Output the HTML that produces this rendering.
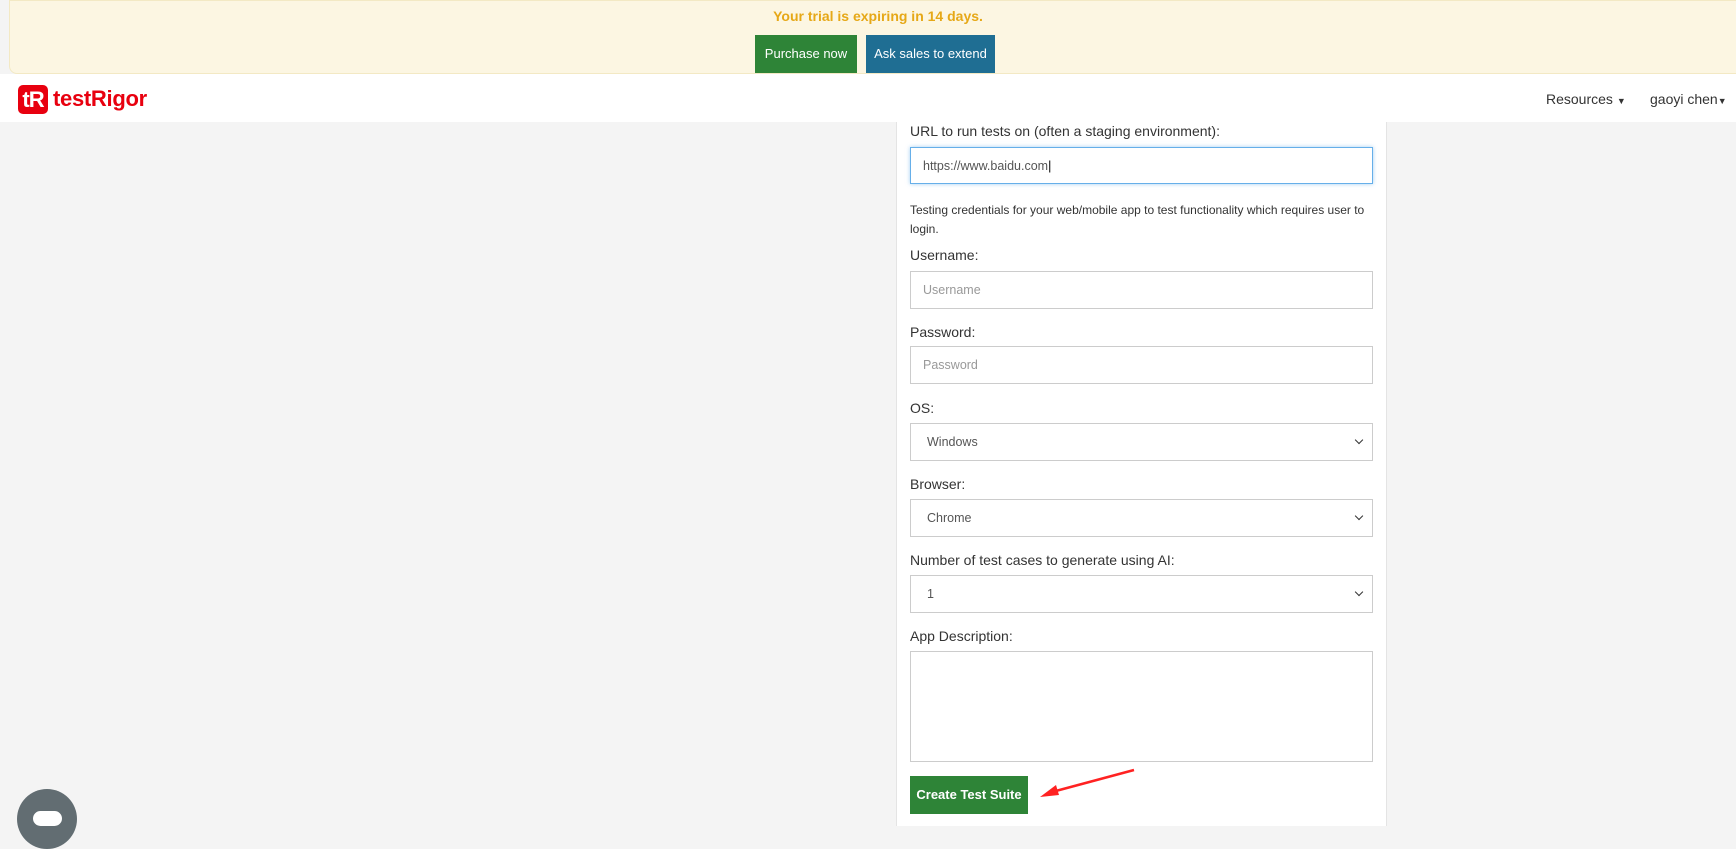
<!DOCTYPE html>
<html><head><meta charset="utf-8"><style>
*{box-sizing:border-box;margin:0;padding:0}
body{width:1736px;height:826px;overflow:hidden;background:#f4f4f4;font-family:"Liberation Sans",sans-serif;color:#333;position:relative}
.banner{position:absolute;left:9px;top:0;width:1740px;height:74px;background:#fcf6e2;border:1px solid #f3e9c4;border-radius:0 0 8px 8px}
.banner .msg{position:absolute;left:0;width:1736px;top:7px;text-align:center;color:#e6a817;font-weight:bold;font-size:14px}
.btn{position:absolute;top:35px;height:38px;color:#fff;font-size:13px;line-height:38px;text-align:center}
.nav{position:absolute;left:0;top:74px;width:1736px;height:48px;background:#fff}
.logo{position:absolute;left:18px;top:11px;width:30px;height:29px;background:#e8000f;border-radius:5px;color:#fff;font-weight:bold;font-size:22px;line-height:29px;text-align:center;letter-spacing:-1px}
.logot{position:absolute;left:53px;top:12px;color:#e8000f;font-weight:bold;font-size:22px;letter-spacing:-0.3px}
.navr{position:absolute;top:17px;font-size:14px;color:#333}
.panel{position:absolute;left:896px;top:122px;width:491px;height:704px;background:#fff;border-left:1px solid #e4e4e4;border-right:1px solid #e4e4e4}
.lbl{position:absolute;left:910px;font-size:14px;color:#333}
.inp{position:absolute;left:910px;width:463px;height:38px;border:1px solid #ccc;background:#fff;font-size:12.5px;color:#999;padding-left:12px;line-height:36px}
.sel{color:#555;padding-left:16px}
.sel:after{content:"";position:absolute;right:10px;top:13px;width:5px;height:5px;border-right:1.6px solid #333;border-bottom:1.6px solid #333;transform:rotate(45deg)}
</style></head><body>
<div class="banner"><div class="msg">Your trial is expiring in 14 days.</div></div>
<div class="btn" style="left:755px;width:102px;background:#2e8437">Purchase now</div>
<div class="btn" style="left:866px;width:129px;background:#1f6e93">Ask sales to extend</div>
<div class="nav">
<div class="logo">tR</div><div class="logot">testRigor</div>
<div class="navr" style="left:1546px">Resources <span style="font-size:9px">▼</span></div>
<div class="navr" style="left:1650px">gaoyi chen<span style="font-size:9px">▼</span></div>
</div>
<div class="panel"></div>
<div class="lbl" style="top:123px">URL to run tests on (often a staging environment):</div>
<div class="inp" style="top:147px;height:37px;border-color:#66afe9;box-shadow:0 0 4px rgba(102,175,233,.6);color:#555">https://www.baidu.com<span style="color:#000">|</span></div>
<div class="lbl" style="top:201px;font-size:12px;line-height:19px;width:455px">Testing credentials for your web/mobile app to test functionality which requires user to login.</div>
<div class="lbl" style="top:247px">Username:</div>
<div class="inp" style="top:271px">Username</div>
<div class="lbl" style="top:324px">Password:</div>
<div class="inp" style="top:346px">Password</div>
<div class="lbl" style="top:400px">OS:</div>
<div class="inp sel" style="top:423px">Windows</div>
<div class="lbl" style="top:476px">Browser:</div>
<div class="inp sel" style="top:499px">Chrome</div>
<div class="lbl" style="top:552px">Number of test cases to generate using AI:</div>
<div class="inp sel" style="top:575px">1</div>
<div class="lbl" style="top:628px">App Description:</div>
<div class="inp" style="top:651px;height:111px"></div>
<div class="btn" style="left:910px;top:776px;width:118px;background:#2e8437;font-size:13px;font-weight:bold">Create Test Suite</div>
<svg style="position:absolute;left:1030px;top:765px" width="110" height="40"><path d="M104 5 L22 27" stroke="#f22" stroke-width="2.5"/><path d="M10 32 L26 20 L29 30 Z" fill="#f22"/></svg>
<div style="position:absolute;left:17px;top:789px;width:60px;height:60px;border-radius:50%;background:#626d72"></div>
<div style="position:absolute;left:33px;top:811px;width:29px;height:15px;border-radius:8px;background:#fff"></div>
</body></html>
